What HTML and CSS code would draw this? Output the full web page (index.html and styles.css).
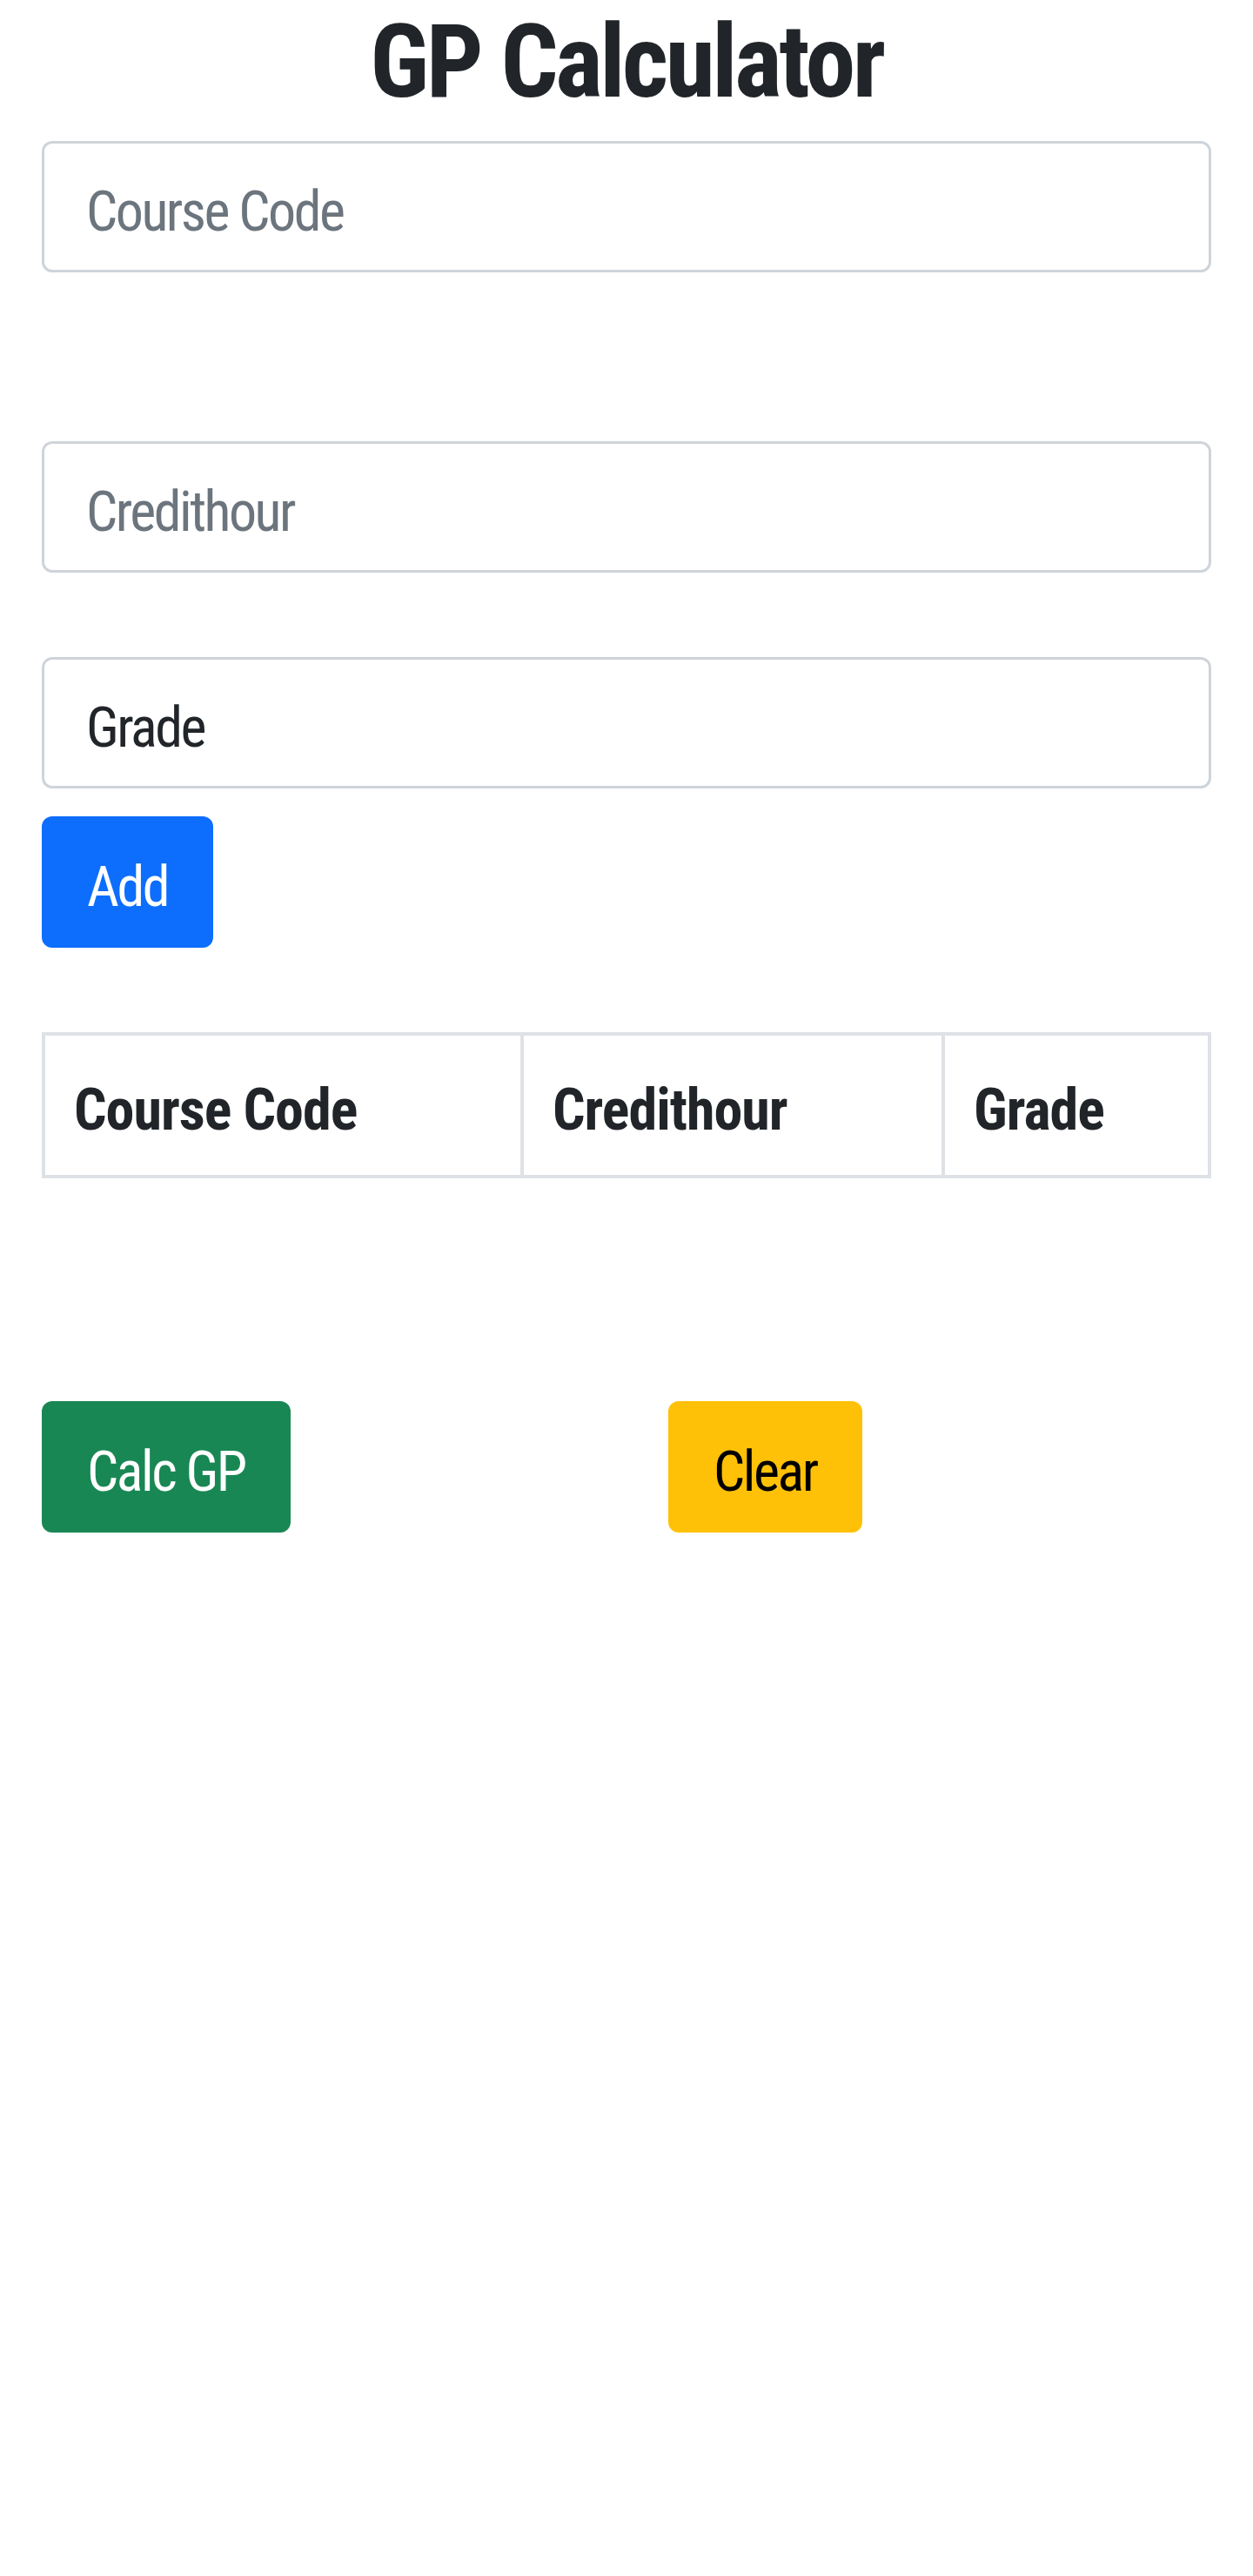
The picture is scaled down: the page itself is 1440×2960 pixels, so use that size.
FILE: index.html
```html
<!DOCTYPE html>
<html lang="en">
<head>
<meta charset="utf-8">
<title>GP Calculator</title>
<link rel="stylesheet" href="styles.css">
</head>
<body>
<div class="container">
  <h1 class="title">GP Calculator</h1>
  <input class="field field-first" type="text" placeholder="Course Code">
  <input class="field field-second" type="text" placeholder="Credithour">
  <input class="field field-third" type="text" value="Grade">
  <button class="btn btn-primary btn-add" type="button">Add</button>
  <table class="grid-table">
    <colgroup>
      <col class="col-code">
      <col class="col-hour">
      <col class="col-grade">
    </colgroup>
    <thead>
      <tr>
        <th>Course Code</th>
        <th>Credithour</th>
        <th>Grade</th>
      </tr>
    </thead>
  </table>
  <div class="actions">
    <div class="action-col"><button class="btn btn-success" type="button">Calc GP</button></div>
    <div class="action-col"><button class="btn btn-warning" type="button">Clear</button></div>
  </div>
</div>
</body>
</html>
```
FILE: styles.css
```css
html, body {
  margin: 0;
  padding: 0;
  background: #ffffff;
}

body {
  font-family: "Roboto Condensed", "Open Sans", "Liberation Sans", sans-serif;
  font-stretch: 75%;
  color: #212529;
}

.container {
  padding: 0 48px;
  display: flex;
  flex-direction: column;
  align-items: flex-start;
}

.title {
  align-self: stretch;
  margin: 0 0 20px;
  text-align: center;
  font-size: 116px;
  line-height: 142px;
  letter-spacing: -3.5px;
  font-weight: 700;
  color: #212529;
}

.field {
  box-sizing: border-box;
  align-self: stretch;
  height: 151px;
  margin: 0;
  padding: 12px 48px 0;
  border: 3px solid #ced4da;
  border-radius: 12px;
  font-family: inherit;
  font-stretch: 75%;
  font-size: 64px;
  letter-spacing: -2.5px;
  color: #212529;
  background: #ffffff;
  outline: none;
}

.field::placeholder {
  color: #6c757d;
  opacity: 1;
}

.field-second {
  margin-top: 194px;
}

.field-third {
  margin-top: 97px;
}

.btn {
  box-sizing: border-box;
  height: 151px;
  margin: 0;
  padding: 12px 52px 0;
  border: 0;
  border-radius: 12px;
  font-family: inherit;
  font-stretch: 75%;
  font-size: 64px;
  letter-spacing: -2.5px;
  line-height: 139px;
  cursor: pointer;
}

.btn-primary {
  background: #0d6efd;
  color: #ffffff;
}

.btn-success {
  background: #198754;
  color: #ffffff;
}

.btn-warning {
  background: #ffc107;
  color: #000000;
}

.btn-add {
  margin-top: 32px;
}

.grid-table {
  align-self: stretch;
  margin-top: 97px;
  width: 100%;
  table-layout: fixed;
  border-collapse: collapse;
}

.col-code { width: 550px; }
.col-hour { width: 484px; }
.col-grade { width: auto; }

.grid-table th {
  border: 4px solid #dee2e6;
  padding: 38px 32px 26px 33px;
  text-align: left;
  font-size: 66px;
  letter-spacing: -1px;
  line-height: 96px;
  font-weight: 700;
  color: #212529;
}

.actions {
  align-self: stretch;
  margin-top: 256px;
  display: grid;
  grid-template-columns: 1fr 1fr;
  column-gap: 96px;
}

.action-col {
  display: flex;
}
```
